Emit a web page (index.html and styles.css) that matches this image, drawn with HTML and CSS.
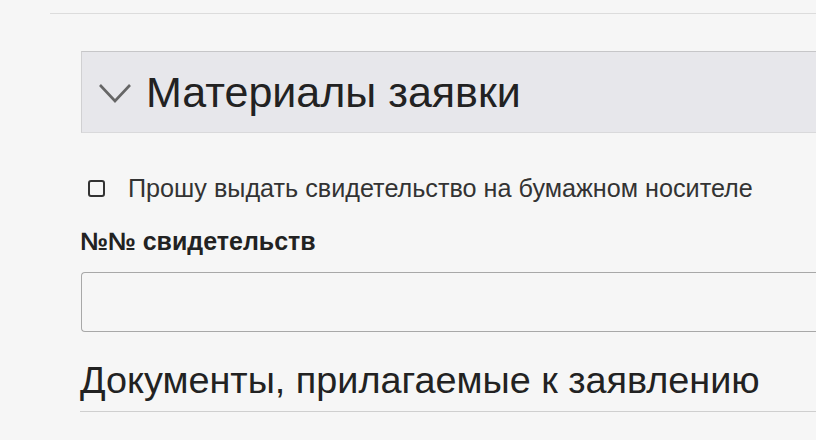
FILE: index.html
```html
<!DOCTYPE html>
<html lang="ru">
<head>
<meta charset="utf-8">
<link rel="stylesheet" href="styles.css">
</head>
<body>
<div class="page">
  <div class="topline"></div>
  <div class="content">
    <div class="panel-head">
      <svg class="chev" width="34" height="22" viewBox="0 0 34 22"><path d="M2 3 L17 19 L32 3" fill="none" stroke="#666" stroke-width="2.6"/></svg>
      <span class="panel-title">Материалы заявки</span>
    </div>
    <label class="check">
      <span class="box"></span>
      <span class="check-text">Прошу выдать свидетельство на бумажном носителе</span>
    </label>
    <div class="field-label">№№ свидетельств</div>
    <div class="input"></div>
    <h2 class="section">Документы, прилагаемые к заявлению</h2>
  </div>
</div>
</body>
</html>
```
FILE: styles.css
```css
html, body { margin: 0; padding: 0; }
body {
  background: #f6f6f6;
  font-family: "Liberation Sans", Arial, sans-serif;
  color: #222;
  width: 816px;
  height: 440px;
  overflow: hidden;
}
.page { padding-top: 13px; }
.topline {
  margin-left: 50px;
  border-top: 1px solid #dcdcdc;
}
.content {
  padding-left: 81px;
  padding-top: 37px;
}
.panel-head {
  display: flex;
  align-items: center;
  background: #e7e7eb;
  border-top: 1px solid #c6c6c8;
  border-left: 1px solid #d0d0d2;
  border-bottom: 1px solid #d9d9db;
  box-sizing: border-box;
  height: 82px;
  padding-left: 16px;
}
.chev { margin-right: 14px; margin-top: 2px; }
.panel-title {
  font-size: 43px;
  color: #222;
}
.check {
  display: flex;
  align-items: center;
  margin-top: 43px;
  margin-left: 7px;
  height: 24px;
}
.box {
  width: 13px;
  height: 13px;
  border: 2px solid #333;
  border-radius: 3px;
  margin-right: 23px;
}
.check-text { font-size: 25.2px; color: #333; }
.field-label {
  margin-top: 27px;
  font-size: 25px;
  font-weight: bold;
  color: #222;
  margin-left: -1px;
}
.input {
  margin-top: 16px;
  height: 60px;
  box-sizing: border-box;
  border: 1px solid #a8a8a8;
  border-radius: 4px;
  border-right: none;
  border-top-right-radius: 0;
  border-bottom-right-radius: 0;
}
.section {
  margin: 27px 0 0 -1px;
  font-weight: normal;
  font-size: 37.8px;
  color: #222;
  padding-bottom: 9px;
  border-bottom: 1px solid #cfcfcf;
}
```
